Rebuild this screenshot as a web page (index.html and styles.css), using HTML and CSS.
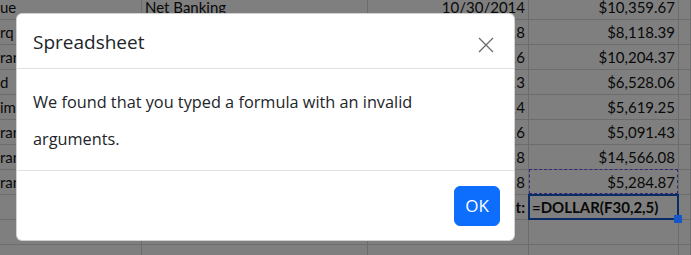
FILE: index.html
```html
<!DOCTYPE html>
<html lang="en">
<head>
<meta charset="utf-8">
<title>Spreadsheet</title>
<link rel="stylesheet" href="styles.css">
</head>
<body>
<div class="sheet">
  <div class="row"><div class="cell a">ue</div><div class="cell b">Net Banking</div><div class="cell c num">10/30/2014</div><div class="cell d num">$10,359.67</div><div class="cell e"></div></div>
  <div class="row"><div class="cell a">rq</div><div class="cell b">Net Banking</div><div class="cell c num">11/26/2018</div><div class="cell d num">$8,118.39</div><div class="cell e"></div></div>
  <div class="row"><div class="cell a">ran</div><div class="cell b">Net Banking</div><div class="cell c num">4/15/2016</div><div class="cell d num">$10,204.37</div><div class="cell e"></div></div>
  <div class="row"><div class="cell a">d</div><div class="cell b">Net Banking</div><div class="cell c num">7/19/2013</div><div class="cell d num">$6,528.06</div><div class="cell e"></div></div>
  <div class="row"><div class="cell a">im</div><div class="cell b">Net Banking</div><div class="cell c num">2/28/2014</div><div class="cell d num">$5,619.25</div><div class="cell e"></div></div>
  <div class="row"><div class="cell a">ran</div><div class="cell b">Net Banking</div><div class="cell c num">9/12/2016</div><div class="cell d num">$5,091.43</div><div class="cell e"></div></div>
  <div class="row"><div class="cell a">ran</div><div class="cell b">Net Banking</div><div class="cell c num">5/21/2018</div><div class="cell d num">$14,566.08</div><div class="cell e"></div></div>
  <div class="row"><div class="cell a">ran</div><div class="cell b">Net Banking</div><div class="cell c num">3/17/2018</div><div class="cell d num marquee">$5,284.87</div><div class="cell e"></div></div>
  <div class="row"><div class="cell a"></div><div class="cell b"></div><div class="cell c num bold">Total Amount:</div><div class="cell d bold sel">=DOLLAR(F30,2,5)</div><div class="cell e"></div></div>
  <div class="row"><div class="cell a"></div><div class="cell b"></div><div class="cell c"></div><div class="cell d"></div><div class="cell e"></div></div>
  <div class="row"><div class="cell a"></div><div class="cell b"></div><div class="cell c"></div><div class="cell d"></div><div class="cell e"></div></div>
</div>

<div class="backdrop"></div>

<div class="modal" role="dialog">
  <div class="modal-header">
    <h5 class="modal-title">Spreadsheet</h5>
    <button class="btn-close" aria-label="Close">
      <svg width="16" height="16" viewBox="0 0 16 16" aria-hidden="true">
        <path d="M1 1 L15 15 M15 1 L1 15" stroke="#6b6b6b" stroke-width="1.3" fill="none"/>
      </svg>
    </button>
  </div>
  <div class="modal-body">We found that you typed a formula with an invalid arguments.</div>
  <div class="modal-footer">
    <button class="btn-ok">OK</button>
  </div>
</div>
</body>
</html>
```

FILE: styles.css
```css
* { box-sizing: border-box; }

html, body {
  margin: 0;
  padding: 0;
  background: #ffffff;
  overflow: hidden;
}

body {
  width: 691px;
  height: 255px;
  position: relative;
}

.sheet {
  margin-top: -5px;
  font-family: "Lato", "Liberation Sans", sans-serif;
  font-size: 15px;
  color: #111;
}

.row {
  display: grid;
  grid-template-columns: 142px 226px 161px 150px 1fr;
  height: 25px;
}

.cell {
  border-right: 1px solid #d8d8d8;
  border-bottom: 1px solid #d8d8d8;
  line-height: 24px;
  padding: 0 3px;
  white-space: nowrap;
  overflow: hidden;
}

.cell.a { padding-left: 0; }
.cell.num { text-align: right; }
.cell.bold { font-weight: 700; }

.cell.sel,
.cell.marquee {
  position: relative;
  overflow: visible;
}

.cell.sel::after {
  content: "";
  position: absolute;
  left: -1px;
  top: -1px;
  right: -1px;
  bottom: -1px;
  border: 2px solid #1656c8;
}

.cell.sel::before {
  content: "";
  position: absolute;
  width: 8px;
  height: 8px;
  right: -4px;
  bottom: -4px;
  background: #1656c8;
  z-index: 1;
}

.cell.marquee::after {
  content: "";
  position: absolute;
  left: 0;
  top: -1px;
  right: 0;
  bottom: 0;
  border: 1px dashed #6a4cf0;
}

.backdrop {
  position: absolute;
  inset: 0;
  background: rgba(0, 0, 0, 0.5);
}

.modal {
  position: absolute;
  left: 16px;
  top: 13px;
  width: 499px;
  background: #fff;
  border: 1px solid rgba(0, 0, 0, 0.175);
  border-radius: 6px;
  font-family: "Open Sans", "Noto Sans", sans-serif;
  color: #212529;
}

.modal-header {
  display: flex;
  align-items: flex-start;
  justify-content: space-between;
  padding: 13px 16px 11px 16px;
  border-bottom: 1px solid #dee2e6;
}

.modal-title {
  margin: 0;
  font-size: 19px;
  font-weight: 500;
  line-height: 30px;
}

.btn-close {
  border: 0;
  background: transparent;
  padding: 0;
  margin: 10px 4px 0 0;
  width: 16px;
  height: 16px;
  display: flex;
}

.modal-body {
  padding: 15px 40px 12px 16px;
  font-size: 16.3px;
  line-height: 37px;
}

.modal-footer {
  display: flex;
  justify-content: flex-end;
  padding: 15px 14px 14px 14px;
  border-top: 1px solid #dee2e6;
}

.btn-ok {
  font-family: "Open Sans", "Noto Sans", sans-serif;
  font-size: 17px;
  line-height: 26px;
  padding: 6px 10px;
  border: 1px solid #0d6efd;
  border-radius: 6px;
  background: #0d6efd;
  color: #fff;
  width: 46px;
}
```
